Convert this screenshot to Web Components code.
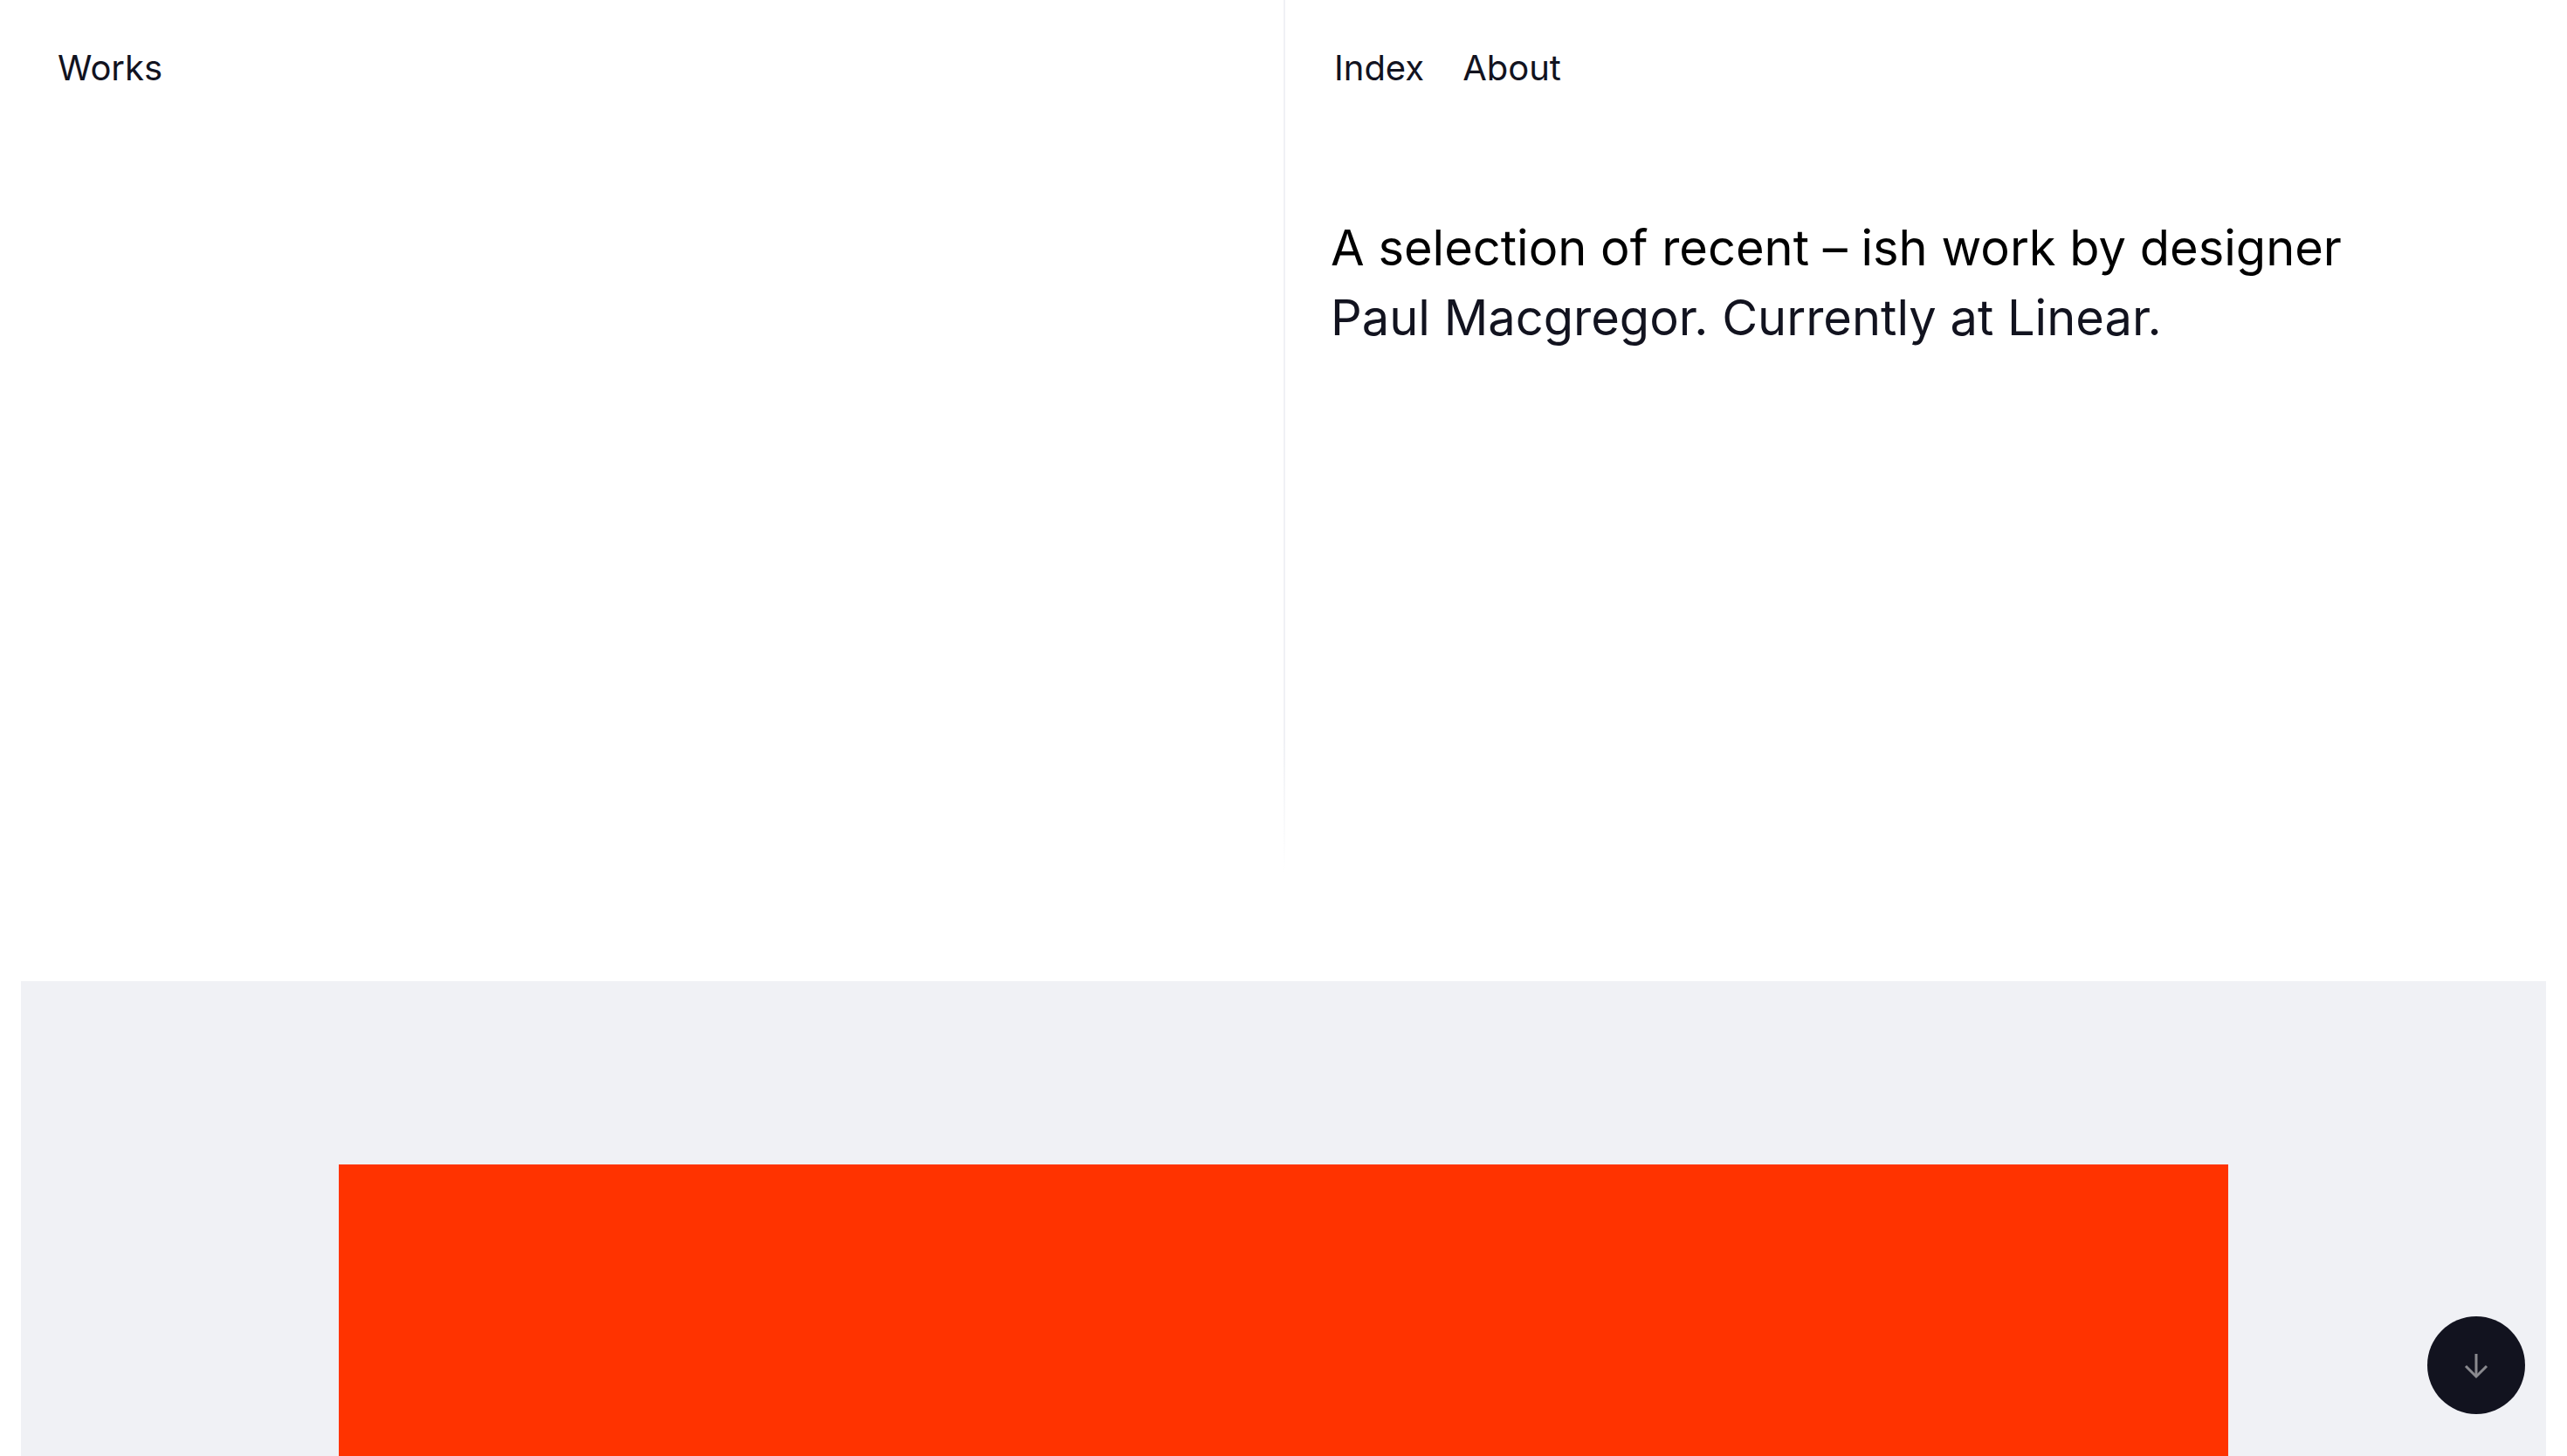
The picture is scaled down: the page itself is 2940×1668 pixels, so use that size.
<!DOCTYPE html>
<html lang="en">
<head>
<meta charset="utf-8">
<title>Works</title>
<style>
  html, body { margin: 0; height: 1668px; overflow: hidden; background: #fff; }
  body { font-family: Inter, "Liberation Sans", sans-serif; color: #12131f; }
</style>
</head>
<body>
<site-hero>
  <nav-link slot="left">Works</nav-link>
  <nav-link slot="right">Index</nav-link>
  <nav-link slot="right">About</nav-link>
  <span slot="intro">A selection of recent – ish work by designer<br><span style="color:#12131f">Paul Macgregor. Currently at Linear.</span></span>
</site-hero>
<work-panel></work-panel>
<scroll-button></scroll-button>
<script>
class NavLink extends HTMLElement {
  constructor() {
    super();
    this.attachShadow({mode: 'open'}).innerHTML = `
      <style>
        :host { display: block; font-size: 40px; line-height: 48px; color: #12131f; }
      </style>
      <slot></slot>`;
  }
}

class SiteHero extends HTMLElement {
  constructor() {
    super();
    this.attachShadow({mode: 'open'}).innerHTML = `
      <style>
        :host { display: grid; grid-template-columns: 1470px 1fr; height: 1124px; }
        .col { padding-top: 54px; }
        .left { padding-left: 66px; }
        .right {
          padding-left: 54px;
          background: linear-gradient(#f0f1f5, #f0f1f5 850px, #fff 1000px) left top / 2px 100% no-repeat;
        }
        .links { display: flex; gap: 44px; padding-left: 4px; }
        p { margin: 142px 0 0; font-size: 56px; line-height: 80px; color: #000; }
      </style>
      <div class="col left"><slot name="left"></slot></div>
      <div class="col right">
        <div class="links"><slot name="right"></slot></div>
        <p><slot name="intro"></slot></p>
      </div>`;
  }
}

class WorkPanel extends HTMLElement {
  constructor() {
    super();
    this.attachShadow({mode: 'open'}).innerHTML = `
      <style>
        :host { display: block; margin: 0 24px; padding: 210px 364px 0; background: #f0f1f5; height: 600px; box-sizing: border-box; }
        .cover { height: 400px; background: #ff3300; }
      </style>
      <div class="cover"></div>`;
  }
}

class ScrollButton extends HTMLElement {
  constructor() {
    super();
    this.attachShadow({mode: 'open'}).innerHTML = `
      <style>
        :host {
          position: fixed; right: 48px; bottom: 48px;
          width: 112px; height: 112px; border-radius: 50%;
          background: #12131f; display: flex; align-items: center; justify-content: center;
        }
        svg { width: 32px; height: 32px; display: block; }
      </style>
      <svg viewBox="0 0 32 32" fill="none" stroke="#8a8a8f" stroke-width="3">
        <path d="M16 3v26"/>
        <path d="M4 17l12 12 12-12"/>
      </svg>`;
  }
}

customElements.define('nav-link', NavLink);
customElements.define('site-hero', SiteHero);
customElements.define('work-panel', WorkPanel);
customElements.define('scroll-button', ScrollButton);
</script>
</body>
</html>
